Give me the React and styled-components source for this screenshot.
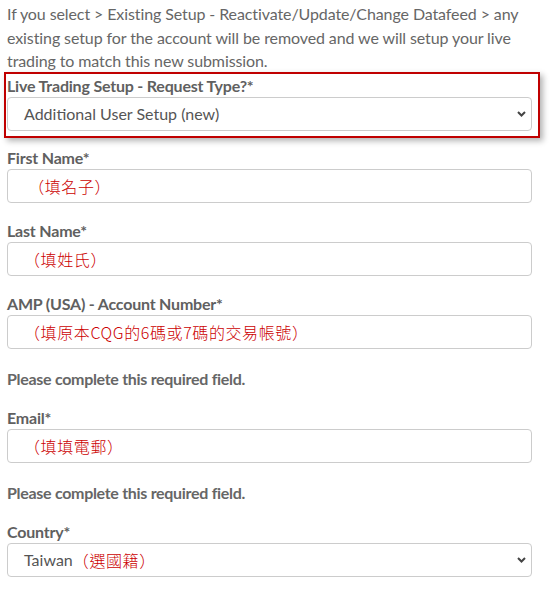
import React from 'react';
import styled, { createGlobalStyle } from 'styled-components';

const GlobalStyle = createGlobalStyle`
  html, body {
    margin: 0;
    padding: 0;
    background: #ffffff;
  }
  body {
    font-family: Lato, "Noto Sans CJK TC", sans-serif;
  }
`;

const Page = styled.div`
  width: 552px;
  padding: 2px 20px 0 7px;
  box-sizing: border-box;
`;

const Intro = styled.p`
  margin: 0 0 -1px;
  font-size: 16px;
  line-height: 23.5px;
  color: #666666;
  letter-spacing: -0.1px;
`;

const Highlight = styled.div`
  margin: 0 -8px 8px -3px;
  padding: 0 6px 5px 1px;
  border: 2px solid #c00000;
  box-shadow: 3px 3px 6px rgba(0, 0, 0, 0.3);
`;

const Field = styled.div`
  display: flex;
  flex-direction: column;
  margin-bottom: ${(p) => (p.$tight ? '0' : '16px')};
`;

const Label = styled.label`
  font-size: 16px;
  font-weight: 700;
  line-height: 23px;
  color: #606060;
  letter-spacing: -0.2px;
`;

const Input = styled.input`
  box-sizing: border-box;
  width: 100%;
  height: 34px;
  margin: 0;
  padding: 0 16px;
  border: 1px solid #cccccc;
  border-radius: 4px;
  background: #ffffff;
  font-family: "Noto Sans CJK TC", Lato, sans-serif;
  font-size: 16px;
  font-weight: 300;
  letter-spacing: 0.6px;
  color: #cc0000;
  outline: none;
`;

const SelectBox = styled.div`
  position: relative;
  box-sizing: border-box;
  height: 34px;
  display: flex;
  align-items: center;
  padding: 0 30px 0 16px;
  border: 1px solid #cccccc;
  border-radius: 4px;
  background: #ffffff;
  font-size: 16px;
  color: #555555;
`;

const Note = styled.span`
  font-family: "Noto Sans CJK TC", sans-serif;
  font-weight: 300;
  letter-spacing: 0.6px;
  color: #cc0000;
`;

const Chevron = styled.svg`
  position: absolute;
  right: 5px;
  top: 50%;
  margin-top: -3px;
`;

const ErrorText = styled.div`
  margin: 18px 0 15px;
  font-size: 16px;
  font-weight: 700;
  line-height: 24px;
  color: #666666;
  letter-spacing: -0.3px;
`;

const Select = ({ children }) => (
  <SelectBox>
    {children}
    <Chevron width="9" height="6" viewBox="0 0 9 6">
      <path d="M1 1 L4.5 4.5 L8 1" fill="none" stroke="#444" strokeWidth="2" />
    </Chevron>
  </SelectBox>
);

const App = () => (
  <>
    <GlobalStyle />
    <Page>
      <Intro>
        If you select &gt; Existing Setup - Reactivate/Update/Change Datafeed &gt; any
        existing setup for the account will be removed and we will setup your live
        trading to match this new submission.
      </Intro>

      <Highlight>
        <Field $tight>
          <Label>Live Trading Setup - Request Type?*</Label>
          <Select>Additional User Setup (new)</Select>
        </Field>
      </Highlight>

      <Field>
        <Label>First Name*</Label>
        <Input defaultValue=" （填名子）" />
      </Field>

      <Field>
        <Label>Last Name*</Label>
        <Input defaultValue="（填姓氏）" />
      </Field>

      <Field $tight>
        <Label>AMP (USA) - Account Number*</Label>
        <Input defaultValue="（填原本CQG的6碼或7碼的交易帳號）" />
      </Field>
      <ErrorText>Please complete this required field.</ErrorText>

      <Field $tight>
        <Label>Email*</Label>
        <Input defaultValue="（填填電郵）" />
      </Field>
      <ErrorText>Please complete this required field.</ErrorText>

      <Field>
        <Label>Country*</Label>
        <Select>
          Taiwan<Note>（選國籍）</Note>
        </Select>
      </Field>
    </Page>
  </>
);

export default App;
